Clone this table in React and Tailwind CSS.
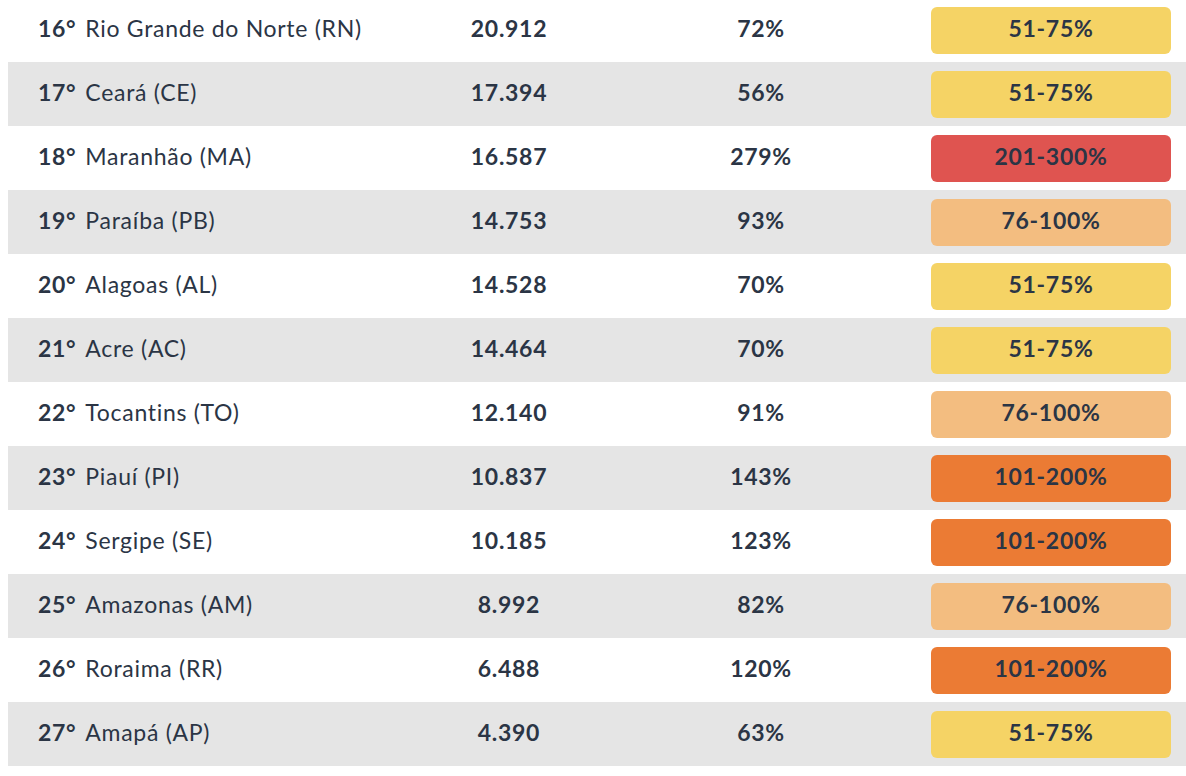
import React from "react";

const rows = [
  { pos: 16, name: "Rio Grande do Norte (RN)", total: "20.912", pct: "72%", range: "51-75%" },
  { pos: 17, name: "Ceará (CE)", total: "17.394", pct: "56%", range: "51-75%" },
  { pos: 18, name: "Maranhão (MA)", total: "16.587", pct: "279%", range: "201-300%" },
  { pos: 19, name: "Paraíba (PB)", total: "14.753", pct: "93%", range: "76-100%" },
  { pos: 20, name: "Alagoas (AL)", total: "14.528", pct: "70%", range: "51-75%" },
  { pos: 21, name: "Acre (AC)", total: "14.464", pct: "70%", range: "51-75%" },
  { pos: 22, name: "Tocantins (TO)", total: "12.140", pct: "91%", range: "76-100%" },
  { pos: 23, name: "Piauí (PI)", total: "10.837", pct: "143%", range: "101-200%" },
  { pos: 24, name: "Sergipe (SE)", total: "10.185", pct: "123%", range: "101-200%" },
  { pos: 25, name: "Amazonas (AM)", total: "8.992", pct: "82%", range: "76-100%" },
  { pos: 26, name: "Roraima (RR)", total: "6.488", pct: "120%", range: "101-200%" },
  { pos: 27, name: "Amapá (AP)", total: "4.390", pct: "63%", range: "51-75%" },
];

const badgeColors = {
  "51-75%": "bg-[#f5d365]",
  "76-100%": "bg-[#f3bd80]",
  "101-200%": "bg-[#eb7b34]",
  "201-300%": "bg-[#df5450]",
};

function App() {
  return (
    <div className="bg-white w-[1186px] h-[776px] overflow-hidden font-['Lato',sans-serif] text-[#2b3545]">
      <div className="-mt-[2px] pl-[8px]">
        {rows.map((row, i) => (
          <div
            key={row.pos}
            className={`flex items-center h-[64px] text-[23px] tracking-[0.7px] ${i % 2 === 1 ? "bg-[#e5e5e5]" : "bg-white"}`}
          >
            <div className="w-[401px] pl-[30px] pb-[3px] whitespace-nowrap">
              <span className="font-bold">{row.pos}°</span>
              <span className="ml-[9px]">{row.name}</span>
            </div>
            <div className="w-[200px] pb-[3px] text-center font-bold">{row.total}</div>
            <div className="w-[304px] pb-[3px] text-center font-bold">{row.pct}</div>
            <div
              className={`ml-[18px] w-[240px] h-[47px] pb-[3px] rounded-[6px] flex items-center justify-center font-bold ${badgeColors[row.range]}`}
            >
              {row.range}
            </div>
          </div>
        ))}
      </div>
    </div>
  );
}

export default App;
